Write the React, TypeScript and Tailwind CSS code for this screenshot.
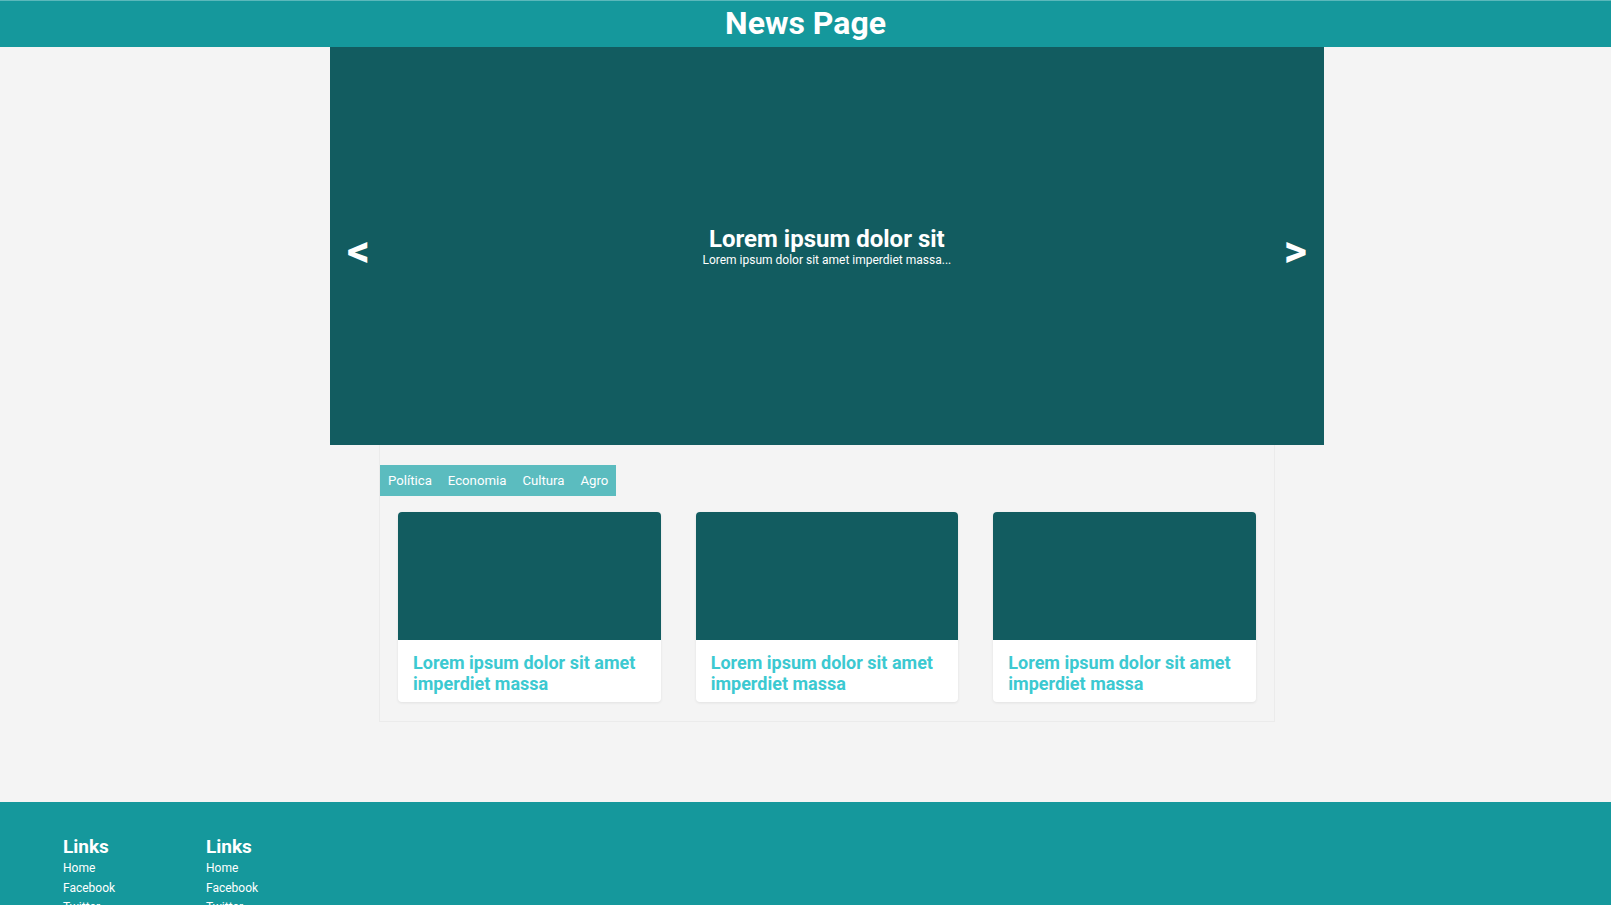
const tabs = ["Política", "Economia", "Cultura", "Agro"];
const cards = [1, 2, 3];
const links = ["Home", "Facebook", "Twitter"];

export default function App() {
  return (
    <div className="min-h-screen bg-[#f4f4f4] font-['Roboto',sans-serif]">
      <header className="h-[47px] bg-[#15989c] border-t border-[#5bb8bb] flex items-center justify-center">
        <h1 className="text-[32px] font-bold text-white leading-none -mt-[2px]">News Page</h1>
      </header>

      <main className="ml-[330px] w-[994px]">
        <section className="h-[398px] bg-[#125c60] flex items-center justify-between px-[17px] text-white">
          <button className="text-[45px] font-bold leading-none mt-[8px]">&lt;</button>
          <div className="flex flex-col items-center mt-[2px]">
            <h2 className="text-[24px] font-bold leading-[27px]">Lorem ipsum dolor sit</h2>
            <p className="text-[12px] leading-[15px]">Lorem ipsum dolor sit amet imperdiet massa...</p>
          </div>
          <button className="text-[45px] font-bold leading-none mt-[8px]">&gt;</button>
        </section>

        <section className="w-[896px] mx-auto border border-t-0 border-[#ebebeb] pt-[20px] pb-[19px]">
          <nav className="inline-flex bg-[#5bbcbf] h-[31px] items-center">
            {tabs.map((t) => (
              <span key={t} className="px-[8px] text-[13.2px] text-white">
                {t}
              </span>
            ))}
          </nav>
          <div className="grid grid-cols-3 gap-[35px] px-[18px] mt-[16px]">
            {cards.map((c) => (
              <article
                key={c}
                className="bg-white rounded-[4px] overflow-hidden shadow-[0_1px_3px_rgba(0,0,0,0.08)]"
              >
                <div className="h-[128px] bg-[#125c60]" />
                <h3 className="px-[15px] pt-[12px] pb-[8px] text-[18px] leading-[21px] font-bold text-[#3cc9d1]">
                  Lorem ipsum dolor sit amet imperdiet massa
                </h3>
              </article>
            ))}
          </div>
        </section>
      </main>

      <footer className="mt-[80px] bg-[#15989c] h-[103px] overflow-hidden pt-[34px] pl-[63px] flex gap-[96px]">
        {[1, 2].map((col) => (
          <div key={col} className="text-white w-[47px]">
            <h4 className="text-[19px] font-bold leading-[22px]">Links</h4>
            <ul className="mt-[1px]">
              {links.map((l) => (
                <li key={l} className="text-[12px] leading-[19.5px]">
                  {l}
                </li>
              ))}
            </ul>
          </div>
        ))}
      </footer>
    </div>
  );
}
